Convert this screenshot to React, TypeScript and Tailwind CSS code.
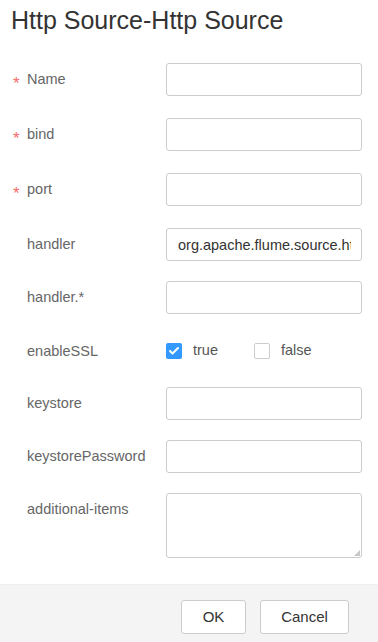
import { Check } from "lucide-react";

type Field = {
  label: string;
  required?: boolean;
  value?: string;
};

const topFields: Field[] = [
  { label: "Name", required: true },
  { label: "bind", required: true },
  { label: "port", required: true },
  { label: "handler", value: "org.apache.flume.source.http.JSONHandler" },
  { label: "handler.*" },
];

const bottomFields: Field[] = [{ label: "keystore" }, { label: "keystorePassword" }];

function Label({ f }: { f: Field }) {
  return (
    <div className="relative w-[166px] shrink-0 pl-[27px] text-[14.5px] leading-[32px] text-[#666]">
      {f.required && (
        <span className="absolute left-[13px] top-[12px] text-[17px] leading-none text-[#f56c6c]">*</span>
      )}
      {f.label}
    </div>
  );
}

function Row({ f, gap }: { f: Field; gap: string }) {
  return (
    <div className={`flex items-start ${gap}`}>
      <Label f={f} />
      <input
        readOnly
        value={f.value ?? ""}
        className="h-[33px] w-[196px] rounded-[3px] border border-[#ccc] bg-white pl-[11px] pr-[10px] text-[14.5px] text-[#333] outline-none"
      />
    </div>
  );
}

function Box({ checked }: { checked?: boolean }) {
  return checked ? (
    <span className="flex h-[16px] w-[16px] items-center justify-center rounded-[2px] bg-[#3399ff]">
      <Check className="h-[12px] w-[12px] text-white" strokeWidth={4} />
    </span>
  ) : (
    <span className="h-[16px] w-[16px] rounded-[2px] border border-[#ccc] bg-white" />
  );
}

export default function App() {
  return (
    <div
      className="flex h-[642px] w-[378px] flex-col bg-white"
      style={{ fontFamily: "'Liberation Sans', Arial, sans-serif" }}
    >
      <h1 className="pl-[11px] pt-[5px] text-[25px] leading-[30px] text-[#333]">
        Http Source-Http Source
      </h1>

      <div className="mt-[28px] flex flex-col">
        {topFields.map((f, i) => (
          <Row key={f.label} f={f} gap={i < 3 ? "mb-[22px]" : "mb-[20px]"} />
        ))}

        <div className="mb-[20px] flex h-[33px] items-center">
          <Label f={{ label: "enableSSL" }} />
          <div className="flex items-center">
            <Box checked />
            <span className="ml-[11px] text-[14.5px] text-[#555]">true</span>
          </div>
          <div className="ml-[36px] flex items-center">
            <Box />
            <span className="ml-[11px] text-[14.5px] text-[#555]">false</span>
          </div>
        </div>

        {bottomFields.map((f) => (
          <Row key={f.label} f={f} gap="mb-[20px]" />
        ))}

        <div className="flex items-start">
          <Label f={{ label: "additional-items" }} />
          <div className="relative">
            <textarea
              readOnly
              className="block h-[65px] w-[196px] resize-none rounded-[3px] border border-[#ccc] bg-white text-[14.5px] outline-none"
            />
            <svg className="absolute bottom-[2px] right-[2px]" width="6" height="6" viewBox="0 0 6 6">
              <path d="M6 0 L6 6 L0 6 Z" fill="#c8c8c8" />
            </svg>
          </div>
        </div>
      </div>

      <div className="mt-auto flex h-[58px] items-start justify-end gap-[14px] border-t border-[#eee] bg-[#f4f4f4] pr-[29px] pt-[15px]">
        <button className="h-[34px] w-[65px] rounded-[3px] border border-[#ccc] bg-white text-[15px] text-[#333]">
          OK
        </button>
        <button className="h-[34px] w-[89px] rounded-[3px] border border-[#ccc] bg-white text-[15px] text-[#333]">
          Cancel
        </button>
      </div>
    </div>
  );
}
